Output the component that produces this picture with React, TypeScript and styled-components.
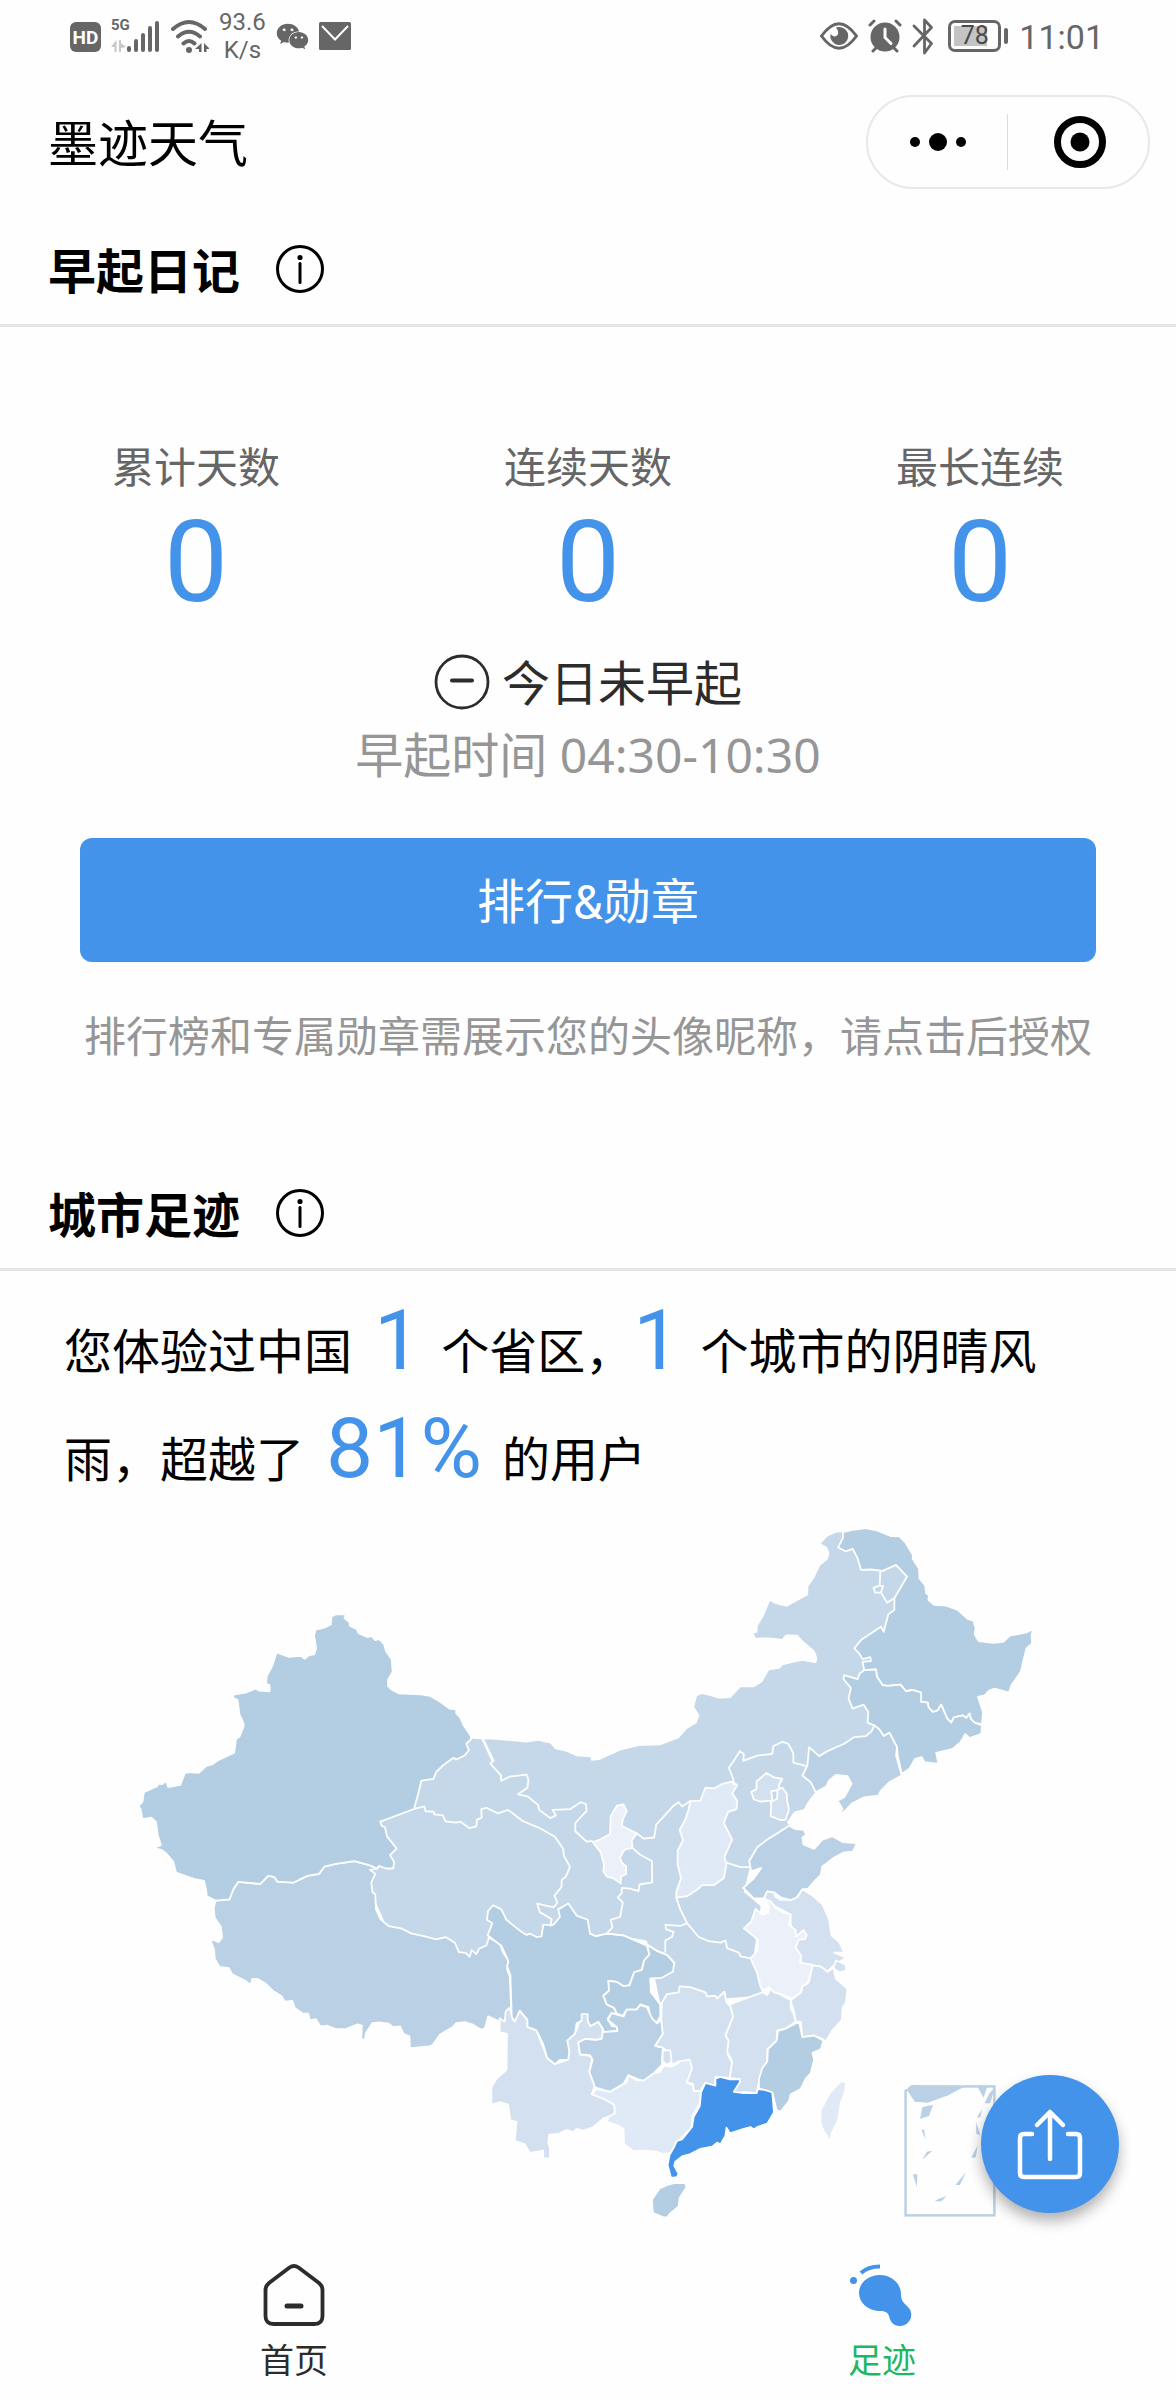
import React from "react";
import styled, { createGlobalStyle } from "styled-components";
import { FaWeixin } from "react-icons/fa";

const BLUE = "#4393ea";
const GREY = "#666666";

const GlobalStyle = createGlobalStyle`
  body {
    margin: 0;
    background: #fefefe;
    color: #000;
    font-family: Roboto, "Noto Sans CJK SC", sans-serif;
  }
  * { box-sizing: border-box; }
  h1, h2, p, dl, dd { margin: 0; }
  button { border: 0; padding: 0; background: none; font: inherit; color: inherit; cursor: pointer; }
  svg { display: block; }
`;

const StatusBar = styled.div`
  display: flex;
  justify-content: space-between;
  align-items: center;
  height: 72px;
  padding: 0 72px 0 70px;
  color: ${GREY};
`;

const StatusGroup = styled.div<{ $gap: number }>`
  display: flex;
  align-items: center;
  gap: ${(p) => p.$gap}px;
`;

const Speed = styled.span`
  font-size: 24px;
  line-height: 28px;
  text-align: center;
`;

const Clock = styled.time`
  padding-top: 2px;
  font-size: 34px;
  line-height: 40px;
`;

const Header = styled.header`
  display: flex;
  justify-content: space-between;
  align-items: center;
  height: 142px;
  padding: 0 26px 2px 48px;
`;

const AppTitle = styled.h1`
  padding-top: 6px;
  font-size: 50px;
  line-height: 72px;
  font-weight: 400;
`;

const Capsule = styled.div`
  display: flex;
  align-items: center;
  width: 284px;
  height: 94px;
  padding-left: 2px;
  border: 2px solid #e8e8e8;
  border-radius: 47px;
`;

const CapsuleButton = styled.button`
  display: flex;
  flex: 1;
  height: 56px;
  align-items: center;
  justify-content: center;
  & + & {
    padding-left: 4px;
    border-left: 1px solid #dcdcdc;
  }
`;

const SectionHead = styled.div`
  display: flex;
  align-items: center;
  gap: 36px;
  height: 113px;
  padding: 0 48px;
  border-bottom: 3px solid #e5e5e5;
`;

const SectionTitle = styled.h2`
  padding-top: 8px;
  font-size: 48px;
  line-height: 72px;
  font-weight: 700;
`;

const Diary = styled.div`
  padding: 112px 80px 90px;
`;

const Stats = styled.dl`
  display: grid;
  grid-template-columns: repeat(3, 1fr);
  margin: 0 -80px;
  text-align: center;
`;

const StatLabel = styled.dt`
  font-size: 42px;
  line-height: 60px;
  color: ${GREY};
`;

const StatValue = styled.dd`
  font-size: 114px;
  line-height: 126px;
  color: ${BLUE};
`;

const Today = styled.p`
  display: flex;
  align-items: center;
  justify-content: center;
  gap: 12px;
  margin-top: 24px;
  font-size: 48px;
  line-height: 72px;
  color: #2c2c2c;
  svg { margin-bottom: 6px; }
`;

const Hours = styled.p`
  font-family: "Noto Sans", "Noto Sans CJK SC", sans-serif;
  font-size: 48px;
  line-height: 68px;
  text-align: center;
  color: #969696;
`;

const RankButton = styled.button`
  display: block;
  width: 100%;
  height: 124px;
  margin: 49px 0 46px;
  padding-bottom: 4px;
  border-radius: 12px;
  background: ${BLUE};
  color: #fff;
  font-size: 48px;
`;

const Note = styled.p`
  margin: 0 -40px;
  font-size: 42px;
  line-height: 60px;
  text-align: center;
  color: #969696;
`;

const Summary = styled.p`
  padding: 28px 64px 4px;
  font-size: 48px;
  line-height: 108px;
`;

const Figure = styled.span<{ $lead?: boolean }>`
  margin-left: ${(p) => (p.$lead ? 22 : 0)}px;
  margin-right: 20px;
  font-size: 84px;
  line-height: 84px;
  color: ${BLUE};
`;

const MapArea = styled.div`
  position: relative;
`;

const MapSvg = styled.svg`
  width: 100%;
  height: auto;
`;

const ShareButton = styled.button`
  position: absolute;
  right: 57px;
  bottom: 6px;
  display: flex;
  align-items: center;
  justify-content: center;
  width: 138px;
  height: 138px;
  border-radius: 50%;
  background: ${BLUE};
  box-shadow: 0 8px 14px rgba(0, 0, 0, 0.3);
`;

const TabBar = styled.nav`
  display: grid;
  grid-template-columns: 1fr 1fr;
  padding: 44px 0 12px;
`;

const Tab = styled.a<{ $active?: boolean }>`
  display: flex;
  flex-direction: column;
  align-items: center;
  gap: 10px;
  font-size: 34px;
  line-height: 48px;
  text-decoration: none;
  color: ${(p) => (p.$active ? "#1db863" : "#2c2c2c")};
`;

const InfoIcon = () => (
  <svg width="48" height="48" viewBox="0 0 48 48" fill="none" stroke="#000" strokeWidth="3">
    <circle cx="24" cy="24" r="22.5" />
    <path d="M24 18.5v19" strokeLinecap="round" />
    <circle cx="24" cy="12.5" r="2.6" fill="#000" stroke="none" />
  </svg>
);

const HdIcon = styled.span`
  display: flex;
  align-items: center;
  justify-content: center;
  width: 31px;
  height: 30px;
  margin-top: 2px;
  border-radius: 6px;
  background: ${GREY};
  color: #fefefe;
  font-size: 19px;
  font-weight: 700;
`;

const SignalWrap = styled.span`
  position: relative;
`;

const NetLabel = styled.span`
  position: absolute;
  left: 0;
  top: -4px;
  font-size: 15px;
  line-height: 20px;
  font-weight: 700;
`;

const Signal = () => (
  <SignalWrap>
    <NetLabel>5G</NetLabel>
    <svg width="50" height="34" viewBox="0 0 50 34" fill="none" stroke={GREY} strokeWidth="4" strokeLinecap="round">
      <path d="M18 31v-2M25 31v-9M32 31v-15M39 31v-22M46 31V4" />
      <path d="M3.500 33V28H0l5.500-7V33zM8 21v12h2v-4l5-1-5-4v-3z" stroke="none" fill="#c8c8c8" />
    </svg>
  </SignalWrap>
);

const Wifi = () => (
  <svg width="38" height="34" viewBox="0 0 38 34" fill="none" stroke={GREY} strokeWidth="4" strokeLinecap="round">
    <path d="M2 10Q18 -4 34 10M7 17.500Q18 8 29 17.500M12.500 24.500Q18 19.500 23.500 24.500" />
    <circle cx="18" cy="31" r="3" fill={GREY} stroke="none" />
    <path d="M30.500 24v9h-2.500v-3h-4zM33 24l6 6h-3.500v3H33z" fill={GREY} stroke="none" />
  </svg>
);

const Mail = () => (
  <svg width="32" height="28" viewBox="0 0 32 28">
    <rect width="32" height="28" rx="1.500" fill={GREY} />
    <path d="M3 4l13 13.500L29 4" fill="none" stroke="#fefefe" strokeWidth="2" />
  </svg>
);

const Eye = () => (
  <svg width="38" height="28" viewBox="0 0 38 28" fill="none" stroke={GREY} strokeWidth="3">
    <path d="M1.500 14Q19-10.500 36.500 14Q19 38.500 1.500 14z" />
    <path d="M19 5a9 9 0 1 1-8.500 7q3.500 4 6.500 1.500T16 5.600Q17 5 19 5z" fill={GREY} stroke="none" />
  </svg>
);

const Alarm = () => (
  <svg width="34" height="34" viewBox="0 0 34 34" fill="none" stroke={GREY} strokeWidth="3" strokeLinecap="round">
    <circle cx="17" cy="18" r="14.500" fill={GREY} stroke="none" />
    <path d="M2 6l4-4M28 2l4 4M5 32l4-4M25 28l4 4" />
    <path d="M17 10v8.500l6 6" stroke="#fefefe" />
  </svg>
);

const Bluetooth = () => (
  <svg width="22" height="38" viewBox="0 0 22 38" fill="none" stroke={GREY} strokeWidth="2.8" strokeLinecap="round" strokeLinejoin="round">
    <path d="M2 9l17.500 17.500L12.500 36V3l7 7.500L2 29" />
  </svg>
);

const Battery = styled.span`
  display: flex;
  align-items: center;
  justify-content: center;
  position: relative;
  width: 53px;
  height: 32px;
  margin: 0 8px 0 4px;
  border: 3px solid ${GREY};
  border-radius: 7px;
  background: linear-gradient(#c4c4c4, #c4c4c4) 3px center / 33px 20px no-repeat;
  font-size: 25px;
  line-height: 28px;
  color: #4a4a4a;
  &::after {
    content: "";
    position: absolute;
    right: -10px;
    top: 5px;
    width: 4px;
    height: 16px;
    border-radius: 2px;
    background: ${GREY};
  }
`;

const C = {
  deep: "#b3cde2",
  mid: "#bad0e5",
  base: "#c5d8e9",
  light: "#d3e0f0",
  pale: "#e0eaf6",
  faint: "#ecf1f9",
};

/* The map is drawn in three sheets; each one has its own origin and scale. */
const WEST = "translate(120 1580) scale(0.33333)";
const SOUTH = "translate(460 1700) scale(0.33333 0.34435)";
const NORTH = "translate(660 1500) scale(0.33333)";

type Region = { sheet: string; fill: string; pts: string };

const land: Region[] = [
  { sheet: SOUTH, fill: C.base, pts: "36,116 75,118 98,118 200,127 235,122 272,130 285,146 320,154 350,167 392,170 394,180 418,178 480,150 535,137 600,135 655,115 685,85 710,70 718,48 702,25 708,0 1100,0 1100,150 1066,268 1040,300 1015,320 985,300 970,350 985,365 870,480 850,560 900,600 880,740 905,860 600,880 560,700 440,680 140,720 -20,780 -200,700 -300,480 -300,300" },
  { sheet: NORTH, fill: C.base, pts: "0,742 55,720 80,690 108,676 118,650 102,625 110,592 125,586 150,592 180,602 210,598 240,566 280,566 305,550 325,515 358,510 365,500 400,492 425,487 466,494 470,480 462,458 430,430 410,409 375,408 364,422 330,417 285,418 279,406 290,402 292,382 310,352 328,308 345,317 378,325 442,290 443,264 460,240 478,202 500,185 506,168 500,148 480,136 500,115 525,104 546,102 560,150 700,200 740,235 700,310 700,330 670,400 680,520 650,680 580,760 465,878 445,900 430,930 400,938 375,975 300,1060 200,1080 0,900" },
];

const regions: Region[] = [
  { sheet: WEST, fill: C.mid, pts: "290,964 332,960 344,930 358,908 424,914 448,890 466,893 475,907 524,910 565,890 600,884 616,862 650,854 705,846 750,858 774,868 752,872 768,884 756,910 760,940 768,945 770,990 784,1020 808,1040 848,1048 875,1062 920,1072 950,1080 978,1073 1006,1090 1018,1118 1038,1120 1050,1132 1056,1112 1070,1124 1078,1108 1100,1098 1108,1075 1140,1092 1150,1120 1166,1142 1162,1170 1170,1190 1174,1280 1158,1300 1160,1330 1148,1335 1138,1325 1106,1310 1096,1345 1085,1350 1060,1335 1035,1327 1010,1330 1000,1342 962,1364 940,1395 930,1400 872,1405 870,1370 852,1362 842,1340 820,1342 808,1332 780,1328 760,1330 740,1360 737,1382 726,1376 728,1338 715,1334 680,1348 650,1348 625,1338 604,1340 590,1318 572,1322 568,1302 552,1302 528,1286 520,1264 497,1266 488,1250 462,1234 440,1212 415,1198 400,1198 396,1216 380,1204 340,1184 330,1166 302,1162 288,1138 286,1110 274,1078 300,1088 310,1074 306,1042 288,1016 285,988" },
  { sheet: WEST, fill: C.deep, pts: "637,115 650,108 680,108 676,120 690,130 692,142 712,152 718,164 745,176 757,173 768,185 780,182 794,196 800,218 817,243 820,280 806,304 806,322 815,332 838,344 905,347 932,352 960,368 990,390 1010,392 1010,404 1022,416 1032,440 1054,472 1054,482 1040,495 1048,515 1035,530 1010,542 1002,537 970,560 950,580 942,600 906,605 895,650 884,690 783,728 787,740 797,745 803,772 832,808 812,828 824,848 822,868 800,868 778,860 774,868 750,858 705,846 650,854 616,862 600,884 565,890 524,910 475,907 466,893 448,890 424,914 358,908 344,930 332,960 290,964 264,950 262,930 256,905 228,900 172,880 164,848 144,824 128,812 104,806 127,798 118,770 112,728 98,716 72,720 66,690 60,682 72,668 76,640 116,622 118,614 130,616 143,606 149,625 185,618 198,584 208,580 240,582 262,562 280,557 300,543 346,522 352,480 362,474 374,444 374,434 362,408 356,364 343,358 344,348 380,342 410,330 420,336 452,338 452,320 442,315 443,294 460,262 473,222 510,235 546,232 557,241 570,230 585,228 591,210 585,170 590,154 615,148 635,138" },
  { sheet: NORTH, fill: C.deep, pts: "546,102 570,96 615,90 650,98 690,114 715,115 732,132 755,170 755,182 774,212 775,240 792,262 795,285 803,290 802,305 820,320 855,322 890,335 920,362 937,368 943,390 940,408 952,428 995,433 1025,430 1045,412 1095,402 1116,391 1110,410 1112,435 1095,450 1085,490 1078,520 1050,560 1043,582 1000,570 985,575 970,590 950,595 965,640 962,677 940,672 928,660 925,645 915,658 905,650 878,656 870,672 858,660 840,618 830,635 815,640 802,626 800,612 780,610 780,582 755,574 735,578 718,558 680,562 665,560 648,535 645,513 610,515 605,490 630,488 628,476 605,482 595,465 580,450 600,425 660,385 668,400 682,348 700,335 700,300 738,235 705,200 665,218 630,214 600,215 590,180 575,152 555,160 532,148 546,120" },
  { sheet: NORTH, fill: C.deep, pts: "610,515 645,513 648,535 665,560 680,562 718,558 735,578 755,574 780,582 780,610 800,612 802,626 815,640 830,635 840,618 858,660 870,672 878,656 905,650 915,658 925,645 928,660 940,672 962,680 960,705 925,718 912,706 898,730 875,750 825,762 832,795 790,790 782,775 762,780 745,810 722,825 710,770 708,745 685,702 668,712 655,692 640,680 620,672 622,640 608,618 575,630 563,600 570,568 548,542 550,530 590,542 596,525" },
  { sheet: NORTH, fill: C.mid, pts: "640,680 655,692 668,712 685,702 708,745 705,770 722,830 685,850 660,875 652,890 610,895 575,912 550,938 528,945 545,930 530,905 550,895 572,855 560,832 525,828 505,845 497,862 465,880 450,850 425,830 440,800 445,745 475,772 500,757 550,735 580,715 615,712 632,698" },
  { sheet: SOUTH, fill: C.light, pts: "120,925 135,935 138,905 150,895 160,930 180,903 203,930 203,950 230,960 262,1040 285,1058 325,1045 322,990 350,960 365,913 383,913 390,948 415,935 428,955 428,980 410,988 375,985 355,995 360,1030 398,1035 388,1080 405,1120 395,1145 440,1155 465,1180 462,1205 430,1215 400,1240 370,1250 350,1245 340,1255 320,1248 295,1260 268,1262 265,1285 270,1300 270,1332 250,1330 250,1308 210,1315 195,1290 165,1280 170,1225 152,1220 145,1175 120,1168 95,1175 95,1125 110,1100 140,1075 142,970 120,965" },
  { sheet: SOUTH, fill: C.deep, pts: "100,598 85,615 82,640 98,650 84,685 100,697 125,715 146,760 142,775 152,800 156,920 165,935 180,903 203,930 203,950 230,960 250,1000 262,1040 285,1058 300,1046 325,1045 328,1020 322,990 345,970 350,940 365,932 365,913 383,913 383,930 390,948 415,935 428,955 432,965 472,962 470,950 455,948 443,925 455,910 490,920 470,915 462,895 440,885 430,860 447,845 445,817 470,820 490,832 508,830 522,792 545,785 552,758 568,740 560,715 525,700 490,685 440,680 408,688 390,680 383,640 350,628 325,593 295,610 300,632 280,655 250,655 245,688 230,690 210,680 200,684 185,675 165,660 140,640 125,610" },
  { sheet: SOUTH, fill: C.deep, pts: "560,712 590,730 620,742 642,765 638,790 605,808 570,810 572,850 600,885 600,920 588,940 570,920 565,893 540,885 530,900 500,900 488,918 470,912 462,895 440,885 430,860 447,845 445,817 470,820 490,832 508,830 522,792 545,785 552,758 568,740" },
  { sheet: SOUTH, fill: C.mid, pts: "428,965 472,962 470,950 443,930 455,910 490,920 500,900 530,900 540,887 560,893 575,925 590,940 603,930 608,970 585,1005 608,1010 605,1060 580,1085 550,1108 505,1090 490,1115 450,1138 405,1125 388,1080 398,1045 390,1032 360,1030 355,995 375,985 410,988 425,985" },
  { sheet: SOUTH, fill: C.pale, pts: "690,1045 698,1060 690,1100 680,1112 698,1118 700,1137 720,1135 722,1165 695,1210 695,1240 655,1280 632,1315 608,1318 590,1312 560,1308 520,1310 492,1290 490,1245 472,1235 440,1225 445,1210 465,1200 462,1175 430,1158 395,1145 410,1130 450,1138 475,1125 500,1110 505,1090 530,1105 550,1105 580,1085 600,1080 610,1062 630,1066 655,1055 655,1045" },
  { sheet: SOUTH, fill: C.light, pts: "605,880 620,855 655,850 658,833 690,835 735,850 740,862 765,860 770,868 792,848 798,880 810,890 818,920 795,975 805,990 802,1030 815,1055 808,1098 765,1095 763,1120 735,1112 720,1135 700,1135 698,1115 680,1110 695,1070 688,1045 655,1050 635,1060 625,1025 608,1010 585,1005 608,970 603,930" },
  { sheet: SOUTH, fill: C.light, pts: "608,1018 630,1018 634,1050 620,1060 606,1048" },
  { sheet: SOUTH, fill: C.light, pts: "808,885 850,870 905,850 920,858 930,838 965,860 990,872 990,895 1000,915 1005,935 975,955 950,960 948,990 920,1015 920,1050 905,1075 895,1110 888,1142 850,1138 820,1145 818,1135 835,1115 838,1102 808,1098 815,1050 800,1020 805,990 795,975 818,920" },
  { sheet: SOUTH, fill: C.light, pts: "1055,772 1080,775 1100,790 1118,780 1125,810 1160,840 1155,880 1145,895 1143,930 1115,960 1095,992 1085,985 1060,975 1025,980 1020,935 1005,935 1000,905 990,875 1000,865 1022,850 1025,832 1045,820" },
  { sheet: SOUTH, fill: C.deep, pts: "1015,935 1025,980 1060,975 1088,990 1080,1015 1055,1025 1060,1045 1050,1085 1035,1100 1020,1130 990,1145 985,1165 960,1195 948,1192 935,1140 895,1128 895,1100 905,1070 920,1050 922,1015 948,990 952,962 975,955" },
  { sheet: SOUTH, fill: BLUE, pts: "735,1112 765,1120 765,1100 780,1095 808,1102 838,1102 838,1110 820,1138 850,1142 888,1142 892,1130 915,1133 935,1140 940,1198 920,1230 890,1240 880,1247 870,1240 850,1245 808,1258 798,1242 795,1265 780,1290 770,1285 755,1297 720,1303 690,1318 665,1325 645,1340 642,1352 655,1375 650,1385 632,1387 622,1350 628,1320 640,1300 650,1280 665,1276 695,1240 700,1210 718,1180 722,1140" },
  { sheet: SOUTH, fill: C.deep, pts: "620,1408 640,1402 675,1402 678,1415 658,1445 655,1470 630,1490 620,1502 605,1500 578,1488 575,1450 598,1418" },
  { sheet: SOUTH, fill: C.pale, pts: "1140,1108 1155,1110 1152,1140 1140,1170 1132,1220 1112,1260 1108,1288 1102,1272 1085,1245 1078,1225 1080,1190 1108,1140" },
  { sheet: SOUTH, fill: C.pale, pts: "812,1264 820,1260 824,1268 816,1274" },
  { sheet: SOUTH, fill: C.mid, pts: "985,368 1005,378 1030,380 1036,395 1025,402 1028,422 1060,435 1085,408 1115,398 1145,415 1188,418 1176,443 1150,445 1120,460 1100,475 1085,485 1080,510 1060,530 1042,550 1025,552 1005,580 990,583 960,575 940,560 920,558 910,578 880,578 848,548 880,520 902,490 872,500 866,470 890,430 920,408 950,390" },
  { sheet: SOUTH, fill: C.light, pts: "910,578 920,558 940,562 945,575 960,582 990,583 1010,575 1025,552 1055,570 1085,595 1105,640 1112,685 1135,705 1150,735 1120,735 1155,750 1115,775 1100,790 1080,775 1060,772 1025,770 1005,720 990,650 990,625 940,600" },
  { sheet: SOUTH, fill: C.light, pts: "1125,758 1155,770 1155,788 1135,792 1118,780" },
  { sheet: SOUTH, fill: C.faint, pts: "915,580 932,588 945,605 965,618 990,625 985,655 1005,670 1005,690 1028,670 1038,685 1032,697 1015,697 1005,720 1022,745 1018,765 1055,770 1050,795 1040,825 1025,832 1020,850 995,868 970,858 940,850 925,835 910,845 900,835 890,795 870,752 890,730 893,700 880,688 850,665 872,645 885,608 905,625 922,620 925,600" },
  { sheet: SOUTH, fill: C.faint, pts: "470,310 490,306 500,325 488,350 485,368 505,378 530,390 515,410 517,432 493,437 480,460 485,475 498,485 498,508 483,514 482,535 460,520 440,515 430,500 432,480 422,445 398,415 420,408 450,392 452,340" },
  { sheet: SOUTH, fill: C.pale, pts: "690,296 720,295 735,258 760,260 785,247 815,240 830,250 815,275 830,295 828,320 803,328 790,360 815,408 805,430 792,458 798,480 790,520 760,540 725,540 712,552 680,572 648,576 648,560 662,520 652,480 652,440 668,410 658,380 675,350 685,320" },
  { sheet: SOUTH, fill: C.light, pts: "918,215 940,228 965,232 955,250 955,265 932,268 935,295 900,298 880,292 872,270 888,262 888,240" },
  { sheet: SOUTH, fill: C.light, pts: "965,258 978,275 980,300 985,320 975,350 960,352 930,340 932,310 930,300 950,290 950,265" },
];

const borders = [
  { sheet: SOUTH, pts: "68,112 102,180 92,188 124,222 124,238 150,226 200,220 206,235 203,258 175,277 205,284 235,308 238,322 272,346 288,338 278,322 330,320 362,300 378,305 380,325 346,360 346,384 380,414 398,412" },
  { sheet: SOUTH, pts: "66,112 99,182" },
  { sheet: SOUTH, pts: "-136,319 -105,312 -102,326 -78,327 -75,335 -50,338 -42,355 -10,359 2,356 30,375 50,370 52,350 66,345 65,320 80,316 115,332 145,322 190,355 238,374 285,400 310,435 312,455 330,487 318,515 305,525 305,545 284,570 292,590 282,604 232,593 240,618 275,638 272,660" },
  { sheet: SOUTH, pts: "517,432 540,452 575,470 576,532 538,538 535,557 510,550 485,548 485,562 473,575 488,590 480,632 452,640 457,662 440,680" },
  { sheet: SOUTH, pts: "530,390 550,405 582,402 588,365 640,310 655,300 665,312 690,296" },
  { sheet: SOUTH, pts: "648,576 660,610 680,650 660,658 615,655 618,668 640,675 635,690 615,700 615,735" },
  { sheet: SOUTH, pts: "440,680 490,685 525,700 560,712 590,730 620,742 642,765" },
  { sheet: SOUTH, pts: "680,650 715,690 745,702 780,706 795,700 800,722 835,735 840,746 870,752" },
  { sheet: SOUTH, pts: "798,475 840,488 870,488" },
  { sheet: SOUTH, pts: "820,250 818,232 805,200 820,180 838,152 850,160 848,180 890,165 935,160 938,138 965,125 982,130 998,158 998,185 1035,195" },
  { sheet: NORTH, pts: "658,220 656,262 638,268 642,283 660,283 678,313 700,300" },
  { sheet: NORTH, pts: "656,262 666,264 660,283" },
];

const insetShapes = [
  "780,690 795,677 948,680 900,706 840,728 803,725",
  "985,680 1014,680 1003,713",
  "1020,700 1036,682 1022,730 1006,730",
  "825,741 856,735 844,768 818,776",
  "999,748 994,772 984,772",
  "822,809 830,809 834,838",
  "981,786 994,825 982,822",
  "838,875 854,872 824,899",
  "986,856 980,892 967,892",
  "797,942 810,942 809,980",
  "952,935 934,974 921,974",
  "872,1016 895,1007 880,1023 860,1023",
];

const ChinaMap = () => (
  <MapSvg viewBox="2 1521 1172 698" role="img" aria-label="城市足迹">
    {land.map((r, i) => (
      <g key={i} transform={r.sheet}>
        <polygon points={r.pts} fill={r.fill} />
      </g>
    ))}
    <g stroke="#fefefe" strokeWidth="1.8" strokeLinejoin="round">
      {regions.map((r, i) => (
        <g key={i} transform={r.sheet}>
          <polygon points={r.pts} fill={r.fill} vectorEffect="non-scaling-stroke" />
        </g>
      ))}
      {borders.map((r, i) => (
        <g key={i} transform={r.sheet}>
          <polyline points={r.pts} fill="none" vectorEffect="non-scaling-stroke" />
        </g>
      ))}
    </g>
    <rect x="904.500" y="2086.500" width="88.500" height="128.500" fill="none" stroke={C.mid} strokeWidth="2.500" />
    <g transform="translate(639 1860) scale(0.3422 0.33333)" fill={C.mid}>
      <polygon points="770,672 797,672 772,692" fill="#fefefe" />
      <polyline points="776,693 798,676" stroke={C.mid} strokeWidth="4" />
      {insetShapes.map((pts) => (
        <polygon key={pts} points={pts} />
      ))}
    </g>
  </MapSvg>
);

export default function App() {
  return (
    <>
      <GlobalStyle />
      <StatusBar>
        <StatusGroup $gap={10}>
          <HdIcon>HD</HdIcon>
          <Signal />
          <Wifi />
          <Speed>
            93.6
            <br />
            K/s
          </Speed>
          <FaWeixin size={33} />
          <Mail />
        </StatusGroup>
        <StatusGroup $gap={10}>
          <Eye />
          <Alarm />
          <Bluetooth />
          <Battery>78</Battery>
          <Clock>11:01</Clock>
        </StatusGroup>
      </StatusBar>

      <Header>
        <AppTitle>墨迹天气</AppTitle>
        <Capsule>
          <CapsuleButton aria-label="更多">
            <svg width="56" height="20" viewBox="0 0 56 20">
              <circle cx="5" cy="10" r="5" />
              <circle cx="28" cy="10" r="9" />
              <circle cx="51" cy="10" r="5" />
            </svg>
          </CapsuleButton>
          <CapsuleButton aria-label="关闭">
            <svg width="52" height="52" viewBox="0 0 52 52">
              <circle cx="26" cy="26" r="22.500" fill="none" stroke="#000" strokeWidth="7" />
              <circle cx="26" cy="26" r="9.500" />
            </svg>
          </CapsuleButton>
        </Capsule>
      </Header>

      <main>
        <section>
          <SectionHead>
            <SectionTitle>早起日记</SectionTitle>
            <button aria-label="早起日记说明">
              <InfoIcon />
            </button>
          </SectionHead>
          <Diary>
            <Stats>
              {["累计天数", "连续天数", "最长连续"].map((label) => (
                <div key={label}>
                  <StatLabel>{label}</StatLabel>
                  <StatValue>0</StatValue>
                </div>
              ))}
            </Stats>
            <Today>
              <svg width="56" height="56" viewBox="0 0 56 56" fill="none" stroke="#2c2c2c" strokeLinecap="round">
                <circle cx="28" cy="28" r="26" strokeWidth="2.800" />
                <path d="M18 26.500h20" strokeWidth="4" />
              </svg>
              今日未早起
            </Today>
            <Hours>早起时间 04:30-10:30</Hours>
            <RankButton>排行&amp;勋章</RankButton>
            <Note>排行榜和专属勋章需展示您的头像昵称，请点击后授权</Note>
          </Diary>
        </section>

        <section>
          <SectionHead>
            <SectionTitle>城市足迹</SectionTitle>
            <button aria-label="城市足迹说明">
              <InfoIcon />
            </button>
          </SectionHead>
          <Summary>
            您体验过中国<Figure $lead>1</Figure>个省区，<Figure>1</Figure>个城市的阴晴风雨，超越了
            <Figure $lead>81%</Figure>的用户
          </Summary>
          <MapArea>
            <ChinaMap />
            <ShareButton aria-label="分享">
              <svg width="68" height="72" viewBox="0 0 68 72" fill="none" stroke="#fff" strokeWidth="4.500" strokeLinecap="round" strokeLinejoin="round">
                <path d="M34 51V4M21 17L34 4l13 13" />
                <path d="M16 26H8q-4 0-4 4v35q0 4 4 4h52q4 0 4-4V30q0-4-4-4h-8" />
              </svg>
            </ShareButton>
          </MapArea>
        </section>
      </main>

      <TabBar>
        <Tab href="#home">
          <svg width="62" height="64" viewBox="0 0 62 64" fill="none" stroke="#2c2c2c" strokeWidth="3.800" strokeLinecap="round" strokeLinejoin="round">
            <path d="M26.500 4.500Q31 1.500 35.500 4.500L56 20q3.500 3 3.500 7v26q0 8-8 8h-41q-8 0-8-8V27q0-4 3.500-7z" />
            <path d="M24 43h14" strokeWidth="5" />
          </svg>
          首页
        </Tab>
        <Tab href="#footprint" $active aria-current="page">
          <svg width="64" height="64" viewBox="0 0 64 64" fill={BLUE}>
            <path d="M30 12C42 12 51 21 51 31C51 38 54 40 58 44C65 51 60 63 50 63C42 63 40 57 39 53C37 48 34 48 28 48C17 47 9 39 9 30C9 20 18 12 30 12z" />
            <path d="M11 10Q18 3.500 30 3.500" fill="none" stroke={BLUE} strokeWidth="4" />
            <circle cx="3.500" cy="17.500" r="3.500" />
          </svg>
          足迹
        </Tab>
      </TabBar>
    </>
  );
}
